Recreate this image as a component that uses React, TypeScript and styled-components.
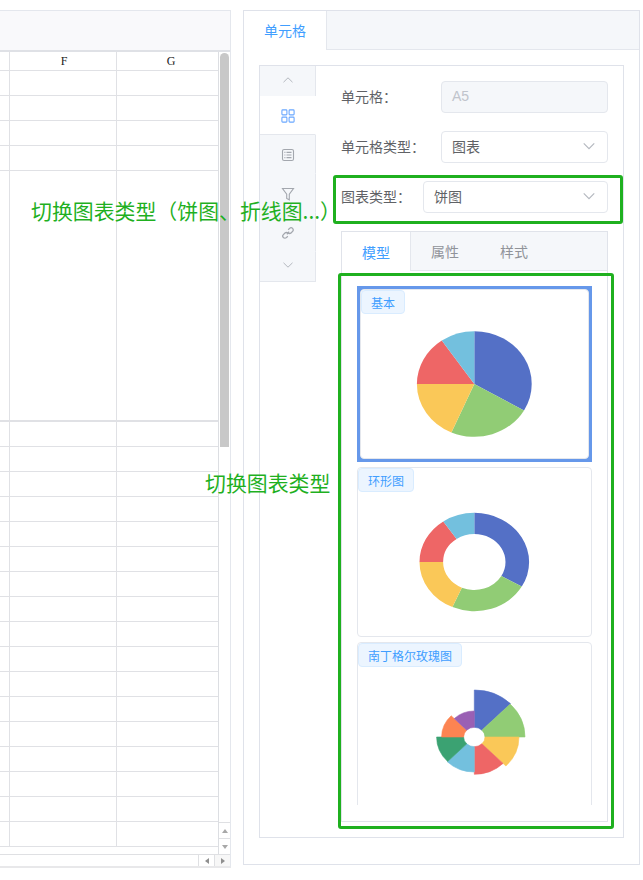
import React from 'react';
import styled, { createGlobalStyle } from 'styled-components';

const GlobalStyle = createGlobalStyle`
  html, body {
    margin: 0;
    padding: 0;
    background: #fff;
    font-family: "Liberation Sans", "Noto Sans CJK SC", sans-serif;
  }
  * {
    box-sizing: border-box;
  }
`;

const Page = styled.div`
  position: relative;
  width: 643px;
  height: 880px;
  overflow: hidden;
  display: flex;
  align-items: flex-start;
  gap: 12px;
  padding-top: 10px;
`;

/* spreadsheet */
const SheetPanel = styled.div`
  width: 231px;
  height: 858px;
  flex: none;
  display: flex;
  flex-direction: column;
  border-top: 1px solid #e4e7ed;
  border-right: 1px solid #e4e7ed;
  border-bottom: 2px solid #e8e8ea;
`;

const SheetToolbar = styled.div`
  height: 41px;
  flex: none;
  background: #f9f9fb;
  border-bottom: 2px solid #dfe1e6;
`;

const SheetBody = styled.div`
  flex: 1;
  min-height: 0;
  display: flex;
`;

const SheetGrid = styled.div`
  width: 219px;
  flex: none;
  overflow: hidden;
  border-right: 1px solid #dcdee2;
`;

const SheetRow = styled.div<{ $height: number }>`
  height: ${p => p.$height}px;
  display: flex;
  border-bottom: ${p => (p.$height > 30 ? 2 : 1)}px solid #e0e1e5;
`;

const SheetCell = styled.div<{ $width: number; $indent: number }>`
  width: ${p => p.$width}px;
  flex: none;
  padding-left: ${p => p.$indent}px;
  border-right: 1px solid #e0e1e5;
  display: flex;
  align-items: center;
  justify-content: center;
  font-family: "Liberation Serif", serif;
  font-size: 12px;
  color: #222;
  &:last-child {
    border-right: 0;
  }
`;

const VScroll = styled.div`
  flex: 1;
  display: flex;
  flex-direction: column;
  background: #fff;
`;

const VThumb = styled.div`
  width: 9px;
  height: 394px;
  margin: 1px 0 0 1px;
  background: #c8c8c8;
  border-radius: 5px 5px 0 0;
`;

const ScrollButton = styled.div<{ $first?: boolean }>`
  height: 16px;
  display: flex;
  align-items: center;
  justify-content: center;
  border-top: 1px solid #dfe0e3;
  ${p => (p.$first ? 'margin-top: auto;' : '')}
`;

const Arrow = styled.i<{ $dir: 'up' | 'down' | 'left' | 'right' }>`
  display: block;
  width: 0;
  height: 0;
  border: 3px solid transparent;
  ${p => (p.$dir === 'up' ? 'border-top: 0; border-bottom: 4px solid #a8a8a8;' : '')}
  ${p => (p.$dir === 'down' ? 'border-bottom: 0; border-top: 4px solid #a8a8a8;' : '')}
  ${p => (p.$dir === 'left' ? 'border-left: 0; border-right: 4px solid #8f8f8f;' : '')}
  ${p => (p.$dir === 'right' ? 'border-right: 0; border-left: 4px solid #8f8f8f;' : '')}
`;

const HScroll = styled.div`
  height: 12px;
  flex: none;
  display: flex;
  justify-content: flex-end;
  border-top: 1px solid #dfe0e3;
`;

const HScrollButton = styled.div<{ $active?: boolean }>`
  width: 16px;
  display: flex;
  align-items: center;
  justify-content: center;
  border-left: 1px solid #dfe0e3;
  background: ${p => (p.$active ? '#f7f7f7' : '#fff')};
`;

/* config panel */
const ConfigPanel = styled.div`
  width: 397px;
  height: 855px;
  flex: none;
  border: 1px solid #dfe2ea;
`;

const PanelTabs = styled.div`
  height: 39px;
  background: #f5f7fa;
  border-bottom: 1px solid #e4e7ed;
`;

const PanelTab = styled.div`
  width: 83px;
  height: 39px;
  padding-bottom: 2px;
  background: #fff;
  border-right: 1px solid #e4e7ed;
  display: flex;
  align-items: center;
  justify-content: center;
  font-size: 14px;
  color: #409eff;
`;

const InnerBox = styled.div`
  margin: 15px 15px 0 15px;
  height: 773px;
  display: flex;
  align-items: flex-start;
  border: 1px solid #dfe2ea;
`;

const SideNav = styled.div`
  width: 56px;
  flex: none;
  background: #f5f7fa;
  border-bottom: 1px solid #e4e7ed;
`;

const SideArrow = styled.div<{ $height: number }>`
  height: ${p => p.$height}px;
  padding-bottom: 3px;
  display: flex;
  align-items: center;
  justify-content: center;
  border-right: 1px solid #e4e7ed;
  color: #b4b8bf;
`;

const SideItem = styled.div<{ $active?: boolean }>`
  height: 39px;
  padding-top: 1px;
  display: flex;
  align-items: center;
  justify-content: center;
  background: ${p => (p.$active ? '#fff' : 'transparent')};
  color: ${p => (p.$active ? '#6aa8ff' : '#a3a7ae')};
  border-right: 1px solid ${p => (p.$active ? 'transparent' : '#e4e7ed')};
  border-bottom: 1px solid ${p => (p.$active ? '#e4e7ed' : 'transparent')};
`;

const FormColumn = styled.div`
  flex: 1;
  min-width: 0;
  padding: 15px 15px 0 25px;
  display: flex;
  flex-direction: column;
  gap: 18px;
`;

const FormRow = styled.div`
  position: relative;
  height: 32px;
  display: flex;
  align-items: center;
`;

const FormLabel = styled.label<{ $width: number }>`
  width: ${p => p.$width}px;
  flex: none;
  padding-bottom: 2px;
  font-size: 14px;
  color: #606266;
`;

const Field = styled.div<{ $disabled?: boolean }>`
  flex: 1;
  height: 32px;
  padding: 0 10px 2px;
  display: flex;
  align-items: center;
  justify-content: space-between;
  border: 1px solid #e4e7ed;
  border-radius: 4px;
  font-size: 14px;
  background: ${p => (p.$disabled ? '#f5f7fa' : '#fff')};
  color: ${p => (p.$disabled ? '#c0c4cc' : '#606266')};
`;

const FieldArrow = styled.span`
  display: flex;
  color: #b4b8bf;
  margin-right: 1px;
`;

const SubTabs = styled.div`
  position: relative;
  border: 1px solid #e0e3ea;
`;

const SubTabBar = styled.div`
  height: 39px;
  display: flex;
  background: #f5f7fa;
  border-bottom: 1px solid #e4e7ed;
`;

const SubTab = styled.div<{ $active?: boolean }>`
  width: 69px;
  height: ${p => (p.$active ? 39 : 38)}px;
  display: flex;
  align-items: center;
  justify-content: center;
  font-size: 14px;
  color: ${p => (p.$active ? '#409eff' : '#909399')};
  background: ${p => (p.$active ? '#fff' : 'transparent')};
  border-right: 1px solid ${p => (p.$active ? '#e4e7ed' : 'transparent')};
`;

const SubTabBody = styled.div`
  padding: 15px 15px 16px;
`;

const ChartList = styled.div`
  height: 519px;
  overflow: hidden;
  display: flex;
  flex-direction: column;
  gap: 5px;
`;

const ChartFrame = styled.div<{ $selected?: boolean }>`
  flex: none;
  padding: ${p => (p.$selected ? 3 : 0)}px;
  background: ${p => (p.$selected ? '#6698ea' : 'transparent')};
`;

const ChartCard = styled.div`
  height: 170px;
  display: flex;
  flex-direction: column;
  align-items: flex-start;
  background: #fff;
  border: 1px solid #e4e7ed;
  border-radius: 4px;
`;

const ChartTag = styled.span`
  height: 24px;
  padding: 0 9px;
  display: flex;
  align-items: center;
  font-size: 12px;
  color: #409eff;
  background: #ecf5ff;
  border: 1px solid #d9ecff;
  border-radius: 4px;
`;

const ChartSvg = styled.svg`
  display: block;
  width: 120px;
  height: 110px;
  margin: 15px auto 0;
  flex: none;
  transform: translateX(-0.7px);
`;

/* annotations */
const Highlight = styled.div<{ $top: number; $right: number; $bottom: number; $left: number }>`
  position: absolute;
  top: ${p => p.$top}px;
  right: ${p => p.$right}px;
  bottom: ${p => p.$bottom}px;
  left: ${p => p.$left}px;
  border: 3px solid #1fb01f;
  border-radius: 3px;
  pointer-events: none;
`;

const Note = styled.div<{ $top: number; $left: number }>`
  position: absolute;
  top: ${p => p.$top}px;
  left: ${p => p.$left}px;
  font-family: "Noto Sans CJK SC", sans-serif;
  font-size: 20.9px;
  line-height: 26px;
  white-space: nowrap;
  color: #1fb01f;
`;

const Chevron = ({ up, size = 12 }: { up?: boolean; size?: number }) => (
  <svg width={size} height={size} viewBox="0 0 12 12" fill="none" stroke="currentColor" strokeWidth="1">
    <path d={up ? 'M1.5 8.2 6 3.8l4.5 4.4' : 'M1.5 3.8 6 8.2l4.5-4.4'} />
  </svg>
);

const GridIcon = () => (
  <svg width="14" height="14" viewBox="0 0 14 14" fill="none" stroke="currentColor" strokeWidth="1.1">
    <rect x="0.9" y="0.9" width="5" height="5" rx="0.8" />
    <rect x="8.1" y="0.9" width="5" height="5" rx="0.8" />
    <rect x="0.9" y="8.1" width="5" height="5" rx="0.8" />
    <rect x="8.1" y="8.1" width="5" height="5" rx="0.8" />
  </svg>
);

const ListIcon = () => (
  <svg width="14" height="14" viewBox="0 0 14 14" fill="none" stroke="currentColor" strokeWidth="1.1">
    <rect x="1.5" y="1.5" width="11" height="11" rx="1.6" />
    <path d="M5.5 4.4H10.5M5.5 7H10.5M5.5 9.6H10.5M3.4 4.4h1M3.4 7h1M3.4 9.6h1" />
  </svg>
);

const FilterIcon = () => (
  <svg width="14" height="14" viewBox="0 0 14 14" fill="none" stroke="currentColor" strokeWidth="1.1">
    <path d="M1.5 1.5h11L8.3 7.2v5.6L5.7 11.4V7.2z" />
  </svg>
);

const LinkIcon = () => (
  <svg width="14" height="14" viewBox="0 0 14 14" fill="none" stroke="currentColor" strokeWidth="1.3">
    <path d="M5.8 8.2 8.2 5.8" />
    <path d="M7.2 3.8 8.6 2.4a2.1 2.1 0 0 1 3 3L10 7a2.1 2.1 0 0 1-3 0" />
    <path d="M6.8 10.2 5.4 11.6a2.1 2.1 0 0 1-3-3L4 7a2.1 2.1 0 0 1 3 0" />
  </svg>
);

// slice of an ellipse, angles in degrees clockwise from the top
const slicePath = (from: number, to: number, rx: number, ry: number, ix: number, iy: number) => {
  const pt = (a: number, x: number, y: number) => {
    const r = (a * Math.PI) / 180;
    return `${(Math.sin(r) * x).toFixed(2)} ${(-Math.cos(r) * y).toFixed(2)}`;
  };
  const large = to - from > 180 ? 1 : 0;
  return `M${pt(from, ix, iy)} L${pt(from, rx, ry)} A${rx} ${ry} 0 ${large} 1 ${pt(to, rx, ry)} L${pt(to, ix, iy)} A${ix} ${iy} 0 ${large} 0 ${pt(from, ix, iy)}Z`;
};

const PIE_SLICES = [
  { from: 0, to: 120, color: '#5470c6' },
  { from: 120, to: 203.5, color: '#91cc75' },
  { from: 203.5, to: 270, color: '#fac858' },
  { from: 270, to: 325.5, color: '#ee6666' },
  { from: 325.5, to: 360, color: '#73c0de' },
];

const ROSE_SLICES = [
  { r: 47, color: '#5470c6' },
  { r: 46.5, color: '#91cc75' },
  { r: 41, color: '#fac858' },
  { r: 37.3, color: '#ee6666' },
  { r: 35, color: '#73c0de' },
  { r: 34.6, color: '#3ba272' },
  { r: 30, color: '#fc8452' },
  { r: 26, color: '#9a60b4' },
];

const PieChart = ({ rx, ry, ix = 0, iy = 0 }: { rx: number; ry: number; ix?: number; iy?: number }) => (
  <ChartSvg viewBox="-60 -55 120 110">
    {PIE_SLICES.map(s => (
      <path key={s.from} d={slicePath(s.from, s.to, rx, ry, ix, iy)} fill={s.color} />
    ))}
  </ChartSvg>
);

const RoseChart = () => (
  <ChartSvg viewBox="-60 -55 120 110">
    {ROSE_SLICES.map((s, i) => (
      <path
        key={s.color}
        d={slicePath(i * 45, (i + 1) * 45, s.r * 1.09, s.r, 10.7, 9.7)}
        fill={s.color}
        stroke={s.color}
        strokeWidth="0.6"
        strokeLinejoin="round"
      />
    ))}
  </ChartSvg>
);

const COLUMNS = [
  { width: 10, indent: 0 },
  { width: 107, indent: 2 },
  { width: 101, indent: 7 },
];

const Row = ({ height, labels }: { height: number; labels?: string[] }) => (
  <SheetRow $height={height}>
    {COLUMNS.map((c, i) => (
      <SheetCell key={c.width} $width={c.width} $indent={c.indent}>{labels?.[i]}</SheetCell>
    ))}
  </SheetRow>
);

export default function App() {
  const rowsTop = Array.from({ length: 4 }, (_, i) => i);
  const rowsBottom = Array.from({ length: 17 }, (_, i) => i);

  return (
    <Page>
      <GlobalStyle />
      <SheetPanel>
        <SheetToolbar />
        <SheetBody>
          <SheetGrid>
            <Row height={19} labels={['', 'F', 'G']} />
            {rowsTop.map(i => <Row key={i} height={25} />)}
            <Row height={251} />
            {rowsBottom.map(i => <Row key={i} height={25} />)}
          </SheetGrid>
          <VScroll>
            <VThumb />
            <ScrollButton $first><Arrow $dir="up" /></ScrollButton>
            <ScrollButton><Arrow $dir="down" /></ScrollButton>
          </VScroll>
        </SheetBody>
        <HScroll>
          <HScrollButton><Arrow $dir="left" /></HScrollButton>
          <HScrollButton $active><Arrow $dir="right" /></HScrollButton>
        </HScroll>
      </SheetPanel>

      <ConfigPanel>
        <PanelTabs>
          <PanelTab>单元格</PanelTab>
        </PanelTabs>
        <InnerBox>
          <SideNav>
            <SideArrow $height={30}><Chevron up /></SideArrow>
            <SideItem $active><GridIcon /></SideItem>
            <SideItem><ListIcon /></SideItem>
            <SideItem><FilterIcon /></SideItem>
            <SideItem><LinkIcon /></SideItem>
            <SideArrow $height={29}><Chevron /></SideArrow>
          </SideNav>
          <FormColumn>
            <FormRow>
              <FormLabel $width={100}>单元格：</FormLabel>
              <Field $disabled>A5</Field>
            </FormRow>
            <FormRow>
              <FormLabel $width={100}>单元格类型：</FormLabel>
              <Field>图表<FieldArrow><Chevron size={14} /></FieldArrow></Field>
            </FormRow>
            <FormRow>
              <FormLabel $width={82}>图表类型：</FormLabel>
              <Field>饼图<FieldArrow><Chevron size={14} /></FieldArrow></Field>
              <Highlight $top={-6} $right={-15} $bottom={-11} $left={-8} />
            </FormRow>
            <SubTabs>
              <SubTabBar>
                <SubTab $active>模型</SubTab>
                <SubTab>属性</SubTab>
                <SubTab>样式</SubTab>
              </SubTabBar>
              <SubTabBody>
                <ChartList>
                  <ChartFrame $selected>
                    <ChartCard>
                      <ChartTag>基本</ChartTag>
                      <PieChart rx={57.4} ry={52.8} />
                    </ChartCard>
                  </ChartFrame>
                  <ChartFrame>
                    <ChartCard>
                      <ChartTag>环形图</ChartTag>
                      <PieChart rx={54.8} ry={49.2} ix={31.2} iy={28} />
                    </ChartCard>
                  </ChartFrame>
                  <ChartFrame>
                    <ChartCard>
                      <ChartTag>南丁格尔玫瑰图</ChartTag>
                      <RoseChart />
                    </ChartCard>
                  </ChartFrame>
                </ChartList>
              </SubTabBody>
              <Highlight $top={41} $right={-7} $bottom={-8} $left={-4} />
            </SubTabs>
          </FormColumn>
        </InnerBox>
      </ConfigPanel>

      <Note $top={197} $left={31}>切换图表类型（饼图、折线图...）</Note>
      <Note $top={469} $left={205}>切换图表类型</Note>
    </Page>
  );
}
